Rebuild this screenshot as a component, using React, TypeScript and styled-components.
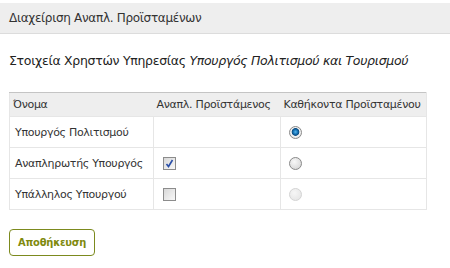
import React from 'react';
import styled, { createGlobalStyle } from 'styled-components';

const Global = createGlobalStyle`
  body {
    margin: 0;
    background: #fff;
    font-family: Tahoma, "DejaVu Sans", Verdana, sans-serif;
    letter-spacing: -0.3px;
    color: #333;
  }
`;

const Page = styled.div`
  width: 450px;
  padding-top: 3px;
`;

const TitleBar = styled.div`
  background: #eeeeee;
  border-bottom: 1px solid #dcdcdc;
  height: 30px;
  line-height: 30px;
  padding: 0 9px;
  font-size: 12px;
  color: #333;
`;

const Body = styled.div`
  padding: 0 24px 0 9px;
`;

const Subtitle = styled.h3`
  margin: 19px 0 0;
  height: 39px;
  font-size: 12.5px;
  line-height: 16px;
  font-weight: normal;
  letter-spacing: -0.3px;
  white-space: nowrap;
  color: #222;
`;

const Table = styled.table`
  width: 417px;
  border-collapse: collapse;
  table-layout: fixed;
  font-size: 11px;
  border: 1px solid #e6e6e6;
  border-top: 1px solid #c4c4c4;
`;

const Th = styled.th<{ $w: number }>`
  box-sizing: border-box;
  width: ${p => p.$w}px;
  background: #eeeeee;
  font-weight: normal;
  text-align: left;
  height: 24px;
  padding: 0 3px;
  white-space: nowrap;
  overflow: visible;
  color: #333;
`;

const Td = styled.td`
  box-sizing: border-box;
  height: 31px;
  padding: 0 5px;
  border: 1px solid #e6e6e6;
  white-space: nowrap;
  color: #333;
`;

const Box = styled.span`
  display: inline-block;
  vertical-align: middle;
  width: 11px;
  height: 11px;
  border: 1px solid #8c8c8c;
  background: linear-gradient(135deg, #d8d8d8, #f8f8f8);
  margin-left: 4px;
  position: relative;
  svg {
    position: absolute;
    left: 1px;
    top: 1px;
  }
`;

const Radio = styled.span<{ $state: 'on' | 'off' | 'disabled' }>`
  display: inline-block;
  vertical-align: middle;
  width: 11px;
  height: 11px;
  border-radius: 50%;
  margin-left: 3px;
  border: 1px solid ${p => (p.$state === 'disabled' ? '#d4d4d4' : '#8a8a8a')};
  background: ${p =>
    p.$state === 'on'
      ? 'radial-gradient(circle at 50% 45%, #5ab8ec 0, #1a78bc 2px, #0c4c80 3.5px, #f4f4f4 4.2px, #d8d8d8 100%)'
      : p.$state === 'off'
      ? 'radial-gradient(circle at 40% 35%, #f8f8f8, #d0d0d0)'
      : 'radial-gradient(circle at 40% 35%, #f6f6f6, #e2e2e2)'};
`;

const Button = styled.button`
  margin-top: 19px;
  height: 27px;
  padding: 0 8px;
  border: 1px solid #7c8a1e;
  border-radius: 4px;
  background: #fff;
  color: #7f8a0e;
  font-family: "DejaVu Sans Condensed", "DejaVu Sans", sans-serif;
  letter-spacing: -0.2px;
  font-size: 11px;
  font-weight: bold;
`;

const Check = () => (
  <svg width="9" height="9" viewBox="0 0 9 9">
    <path d="M1.5 5 L3.5 7.5 L7.5 1" stroke="#2a4fa8" strokeWidth="1.6" fill="none" />
  </svg>
);

const rows = [
  { name: 'Υπουργός Πολιτισμού', box: null, radio: 'on' as const },
  { name: 'Αναπληρωτής Υπουργός', box: true, radio: 'off' as const },
  { name: 'Υπάλληλος Υπουργού', box: false, radio: 'disabled' as const },
];

export default function App() {
  return (
    <Page>
      <Global />
      <TitleBar>Διαχείριση Αναπλ. Προϊσταμένων</TitleBar>
      <Body>
        <Subtitle>
          Στοιχεία Χρηστών Υπηρεσίας <em>Υπουργός Πολιτισμού και Τουρισμού</em>
        </Subtitle>
        <Table>
          <thead>
            <tr>
              <Th $w={144}>Όνομα</Th>
              <Th $w={127}>Αναπλ. Προϊστάμενος</Th>
              <Th $w={146}>Καθήκοντα Προϊσταμένου</Th>
            </tr>
          </thead>
          <tbody>
            {rows.map(r => (
              <tr key={r.name}>
                <Td>{r.name}</Td>
                <Td>{r.box !== null && <Box>{r.box && <Check />}</Box>}</Td>
                <Td>
                  <Radio $state={r.radio} />
                </Td>
              </tr>
            ))}
          </tbody>
        </Table>
        <Button>Αποθήκευση</Button>
      </Body>
    </Page>
  );
}
